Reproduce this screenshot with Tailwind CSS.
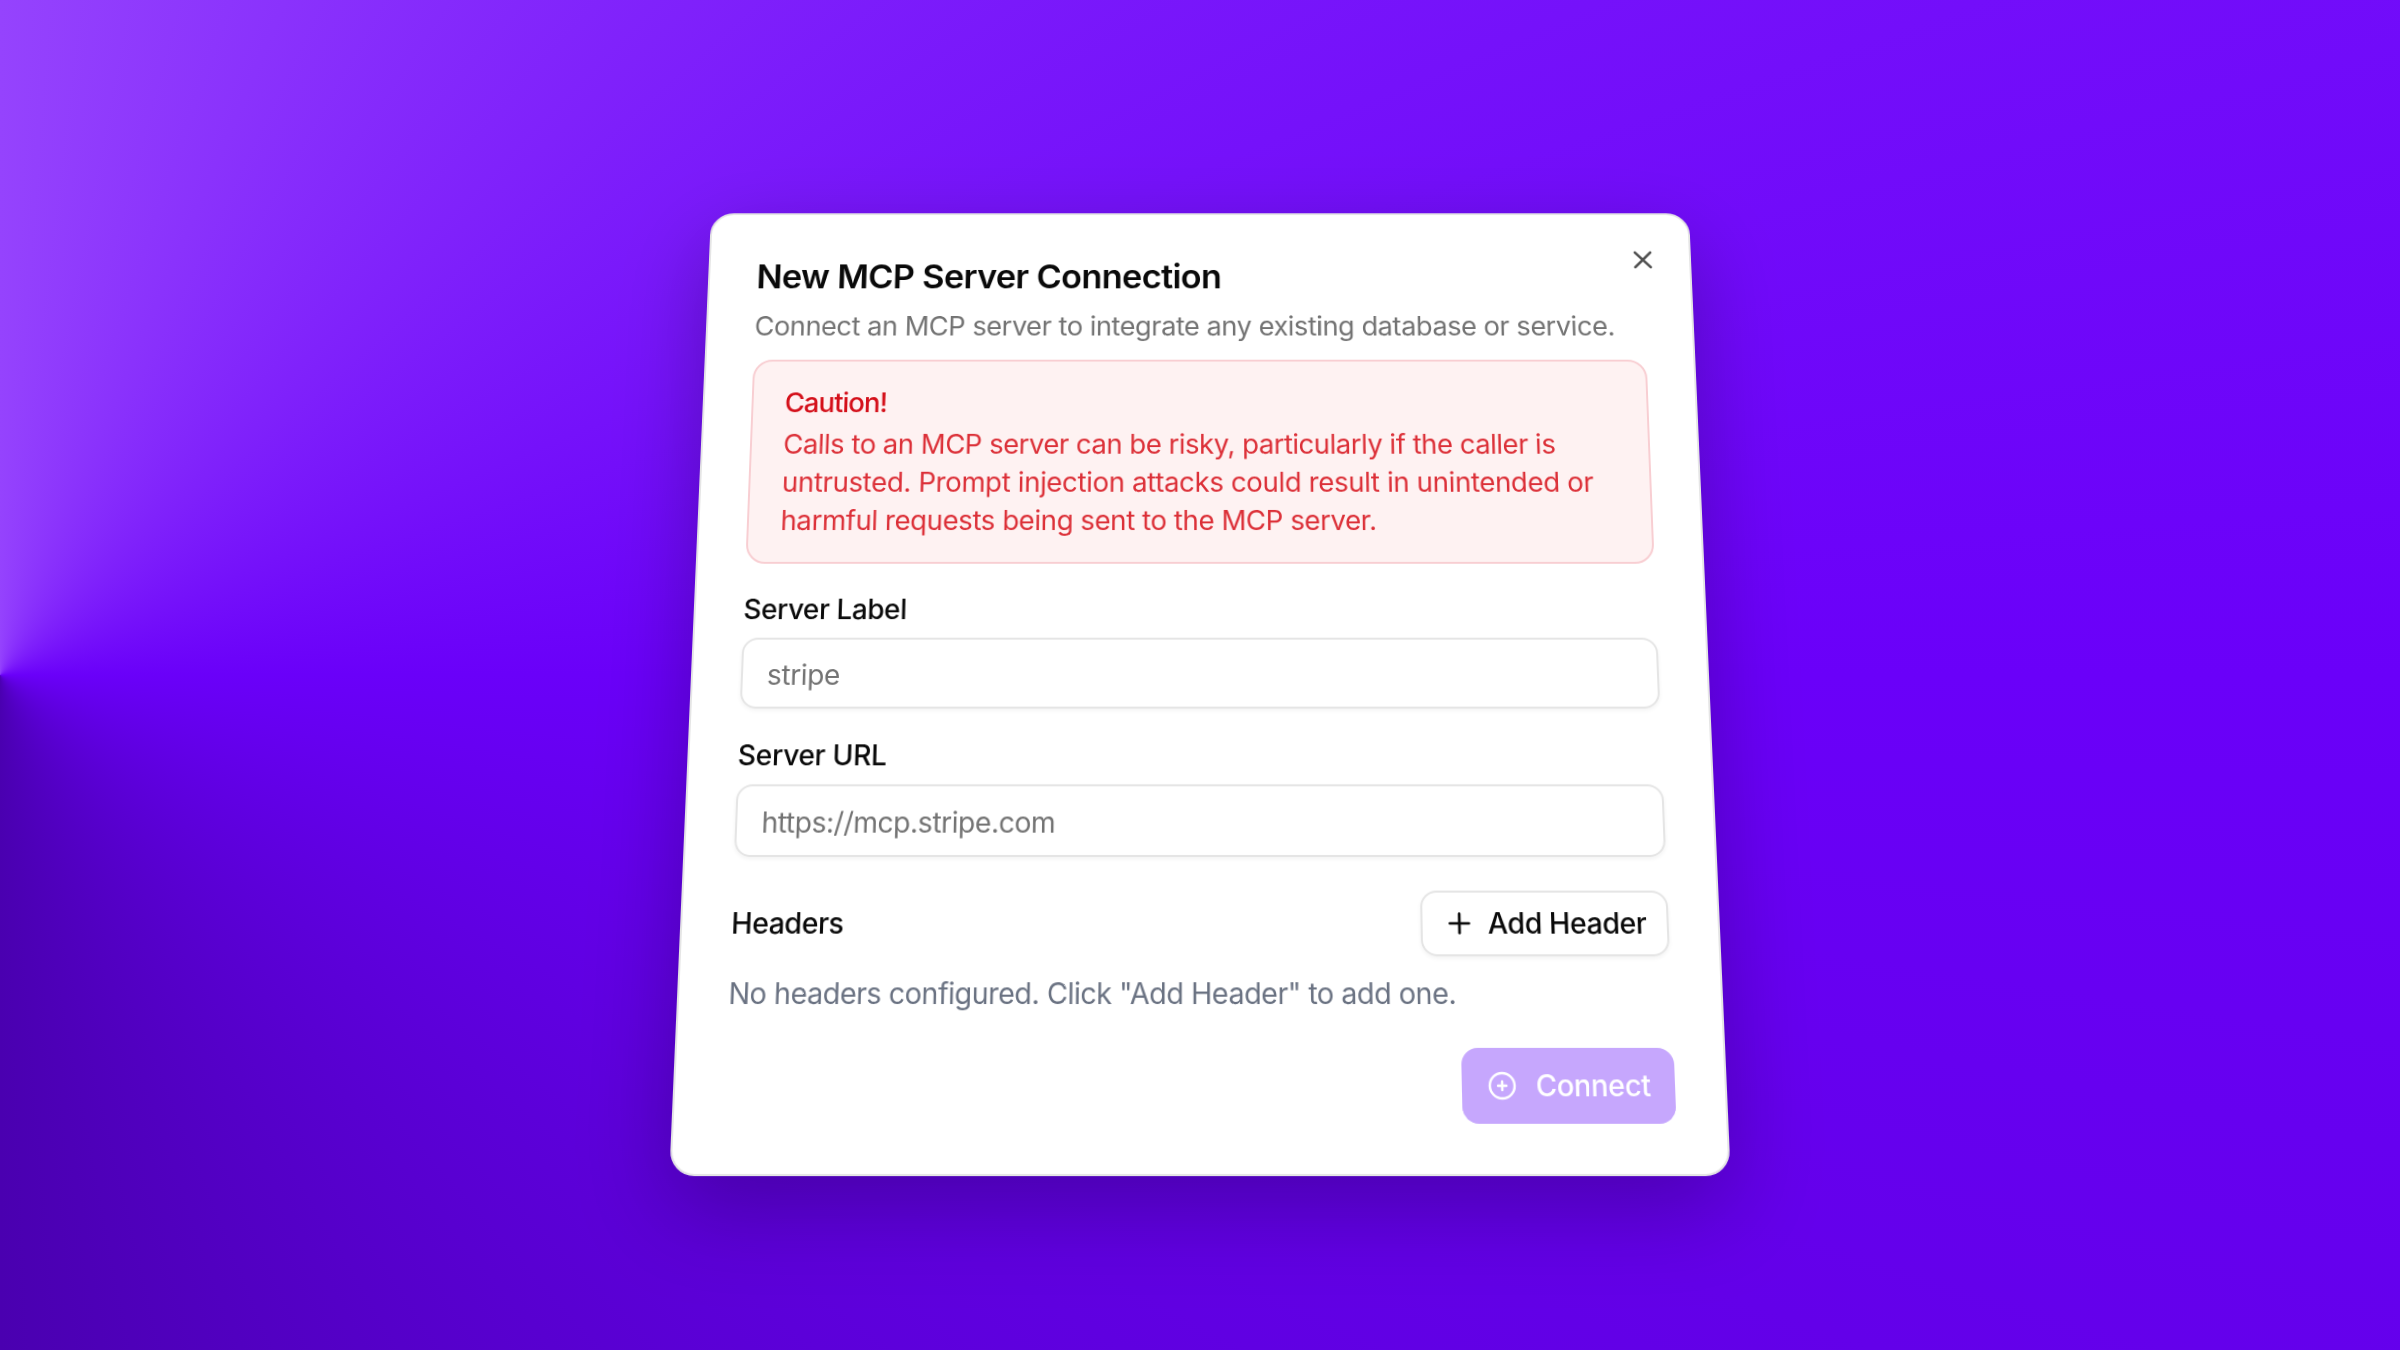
<!DOCTYPE html>
<html lang="en">

<head>
    <meta charset="UTF-8">
    <meta name="viewport" content="width=device-width, initial-scale=1.0">
    <title>New MCP Server Connection</title>
    <script src="https://cdn.jsdelivr.net/npm/@tailwindcss/browser@4"></script>
</head>

<body class="font-['Inter','Liberation_Sans',sans-serif] antialiased">

    <div
        class="w-[2400px] h-[1350px] overflow-hidden flex items-center justify-center perspective-[2071px] bg-[conic-gradient(from_0deg_at_0%_50%,#9543fd_0deg,#6a00f9_90deg,#4a00b0_180deg)]">

        <!-- dialog -->
        <div
            class="relative flex-none w-[1018px] h-[976px] rounded-3xl bg-white border-2 border-neutral-200 px-12 pt-[42px] transform-[rotateX(10deg)] shadow-[0_30px_88px_0_rgba(0,0,0,0.26)] text-neutral-950 text-[28px] leading-10">

            <button type="button" class="absolute top-[33px] right-8 text-neutral-600">
                <svg class="size-8" viewBox="0 0 24 24" fill="none" stroke="currentColor" stroke-width="2"
                    stroke-linecap="round" stroke-linejoin="round">
                    <path d="M18 6 6 18" />
                    <path d="m6 6 12 12" />
                </svg>
            </button>

            <div class="h-[115px] whitespace-nowrap">
                <h1 class="text-[35.5px] leading-[52px] font-semibold tracking-[-0.67px]">New MCP Server Connection</h1>
                <p class="mt-[7px] text-neutral-500 tracking-[-0.46px]">Connect an MCP server to integrate any existing database or service.</p>
            </div>

            <div class="h-[215px] rounded-[20px] border-2 border-[#f8ced2] bg-[#fef2f2] px-8 pt-6">
                <h2 class="font-medium text-[#d4101a] tracking-[-0.95px]">Caution!</h2>
                <p class="mt-1 text-[#dc3038] whitespace-nowrap">
                    <span class="tracking-[-0.48px]">Calls to an MCP server can be risky, particularly if the caller is</span><br>
                    <span class="tracking-[-0.34px]">untrusted. Prompt injection attacks could result in unintended or</span><br>
                    <span class="tracking-[-0.44px]">harmful requests being sent to the MCP server.</span>
                </p>
            </div>

            <form onsubmit="event.preventDefault();">
                <label for="label" class="mt-8 block h-11 leading-[30px] font-medium tracking-[-0.38px]">Server Label</label>
                <input type="text" id="label" placeholder="stripe"
                    class="block w-full h-[72px] rounded-2xl border-2 border-neutral-200 px-6 pt-[3px] tracking-[-0.35px] shadow-[0_2px_4px_0_rgba(0,0,0,0.05)] placeholder:text-neutral-500">

                <label for="url" class="mt-8 block h-11 leading-[30px] font-medium tracking-[-0.3px]">Server URL</label>
                <input type="text" id="url" placeholder="https://mcp.stripe.com"
                    class="block w-full h-[72px] rounded-2xl border-2 border-neutral-200 px-6 pt-[3px] tracking-[-0.48px] shadow-[0_2px_4px_0_rgba(0,0,0,0.05)] placeholder:text-neutral-500">

                <div class="mt-[33px] flex items-center justify-between font-medium tracking-[-0.45px]">
                    <span>Headers</span>
                    <button type="button"
                        class="flex items-center justify-center gap-3 w-[243px] h-16 rounded-2xl border-2 border-neutral-200 shadow-[0_2px_4px_0_rgba(0,0,0,0.05)]">
                        <svg class="size-8" viewBox="0 0 24 24" fill="none" stroke="currentColor" stroke-width="2"
                            stroke-linecap="round" stroke-linejoin="round">
                            <path d="M5 12h14" />
                            <path d="M12 5v14" />
                        </svg>
                        Add Header
                    </button>
                </div>

                <p class="mt-4 text-gray-500 tracking-[-0.48px] whitespace-nowrap">No headers configured. Click "Add Header" to add one.</p>

                <div class="mt-8 flex justify-end">
                    <button type="submit"
                        class="flex items-center justify-center gap-4 w-[206px] h-[72px] rounded-2xl bg-[#c6a7fd] font-medium tracking-[-0.3px] text-white">
                        <svg class="size-8" viewBox="0 0 32 32" fill="none" stroke="currentColor" stroke-width="2.4"
                            stroke-linecap="round">
                            <circle cx="16" cy="16" r="12" />
                            <path d="M12 16h8" />
                            <path d="M16 12v8" />
                        </svg>
                        Connect
                    </button>
                </div>
            </form>
        </div>
    </div>

</body>

</html>
